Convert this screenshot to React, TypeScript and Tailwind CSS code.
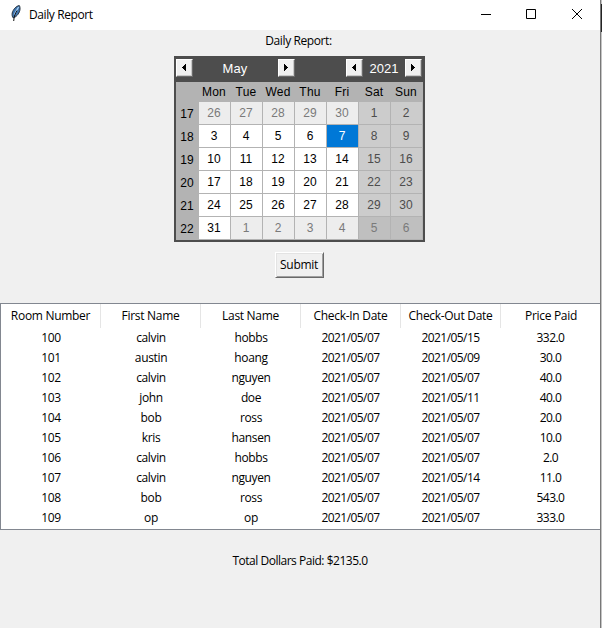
import React from "react";

const weekdays = ["Mon", "Tue", "Wed", "Thu", "Fri", "Sat", "Sun"];

const weeks = [
  { no: 17, days: [26, 27, 28, 29, 30, 1, 2] },
  { no: 18, days: [3, 4, 5, 6, 7, 8, 9] },
  { no: 19, days: [10, 11, 12, 13, 14, 15, 16] },
  { no: 20, days: [17, 18, 19, 20, 21, 22, 23] },
  { no: 21, days: [24, 25, 26, 27, 28, 29, 30] },
  { no: 22, days: [31, 1, 2, 3, 4, 5, 6] },
];

const headings = ["Room Number", "First Name", "Last Name", "Check-In Date", "Check-Out Date", "Price Paid"];

const rows = [
  ["100", "calvin", "hobbs", "2021/05/07", "2021/05/15", "332.0"],
  ["101", "austin", "hoang", "2021/05/07", "2021/05/09", "30.0"],
  ["102", "calvin", "nguyen", "2021/05/07", "2021/05/07", "40.0"],
  ["103", "john", "doe", "2021/05/07", "2021/05/11", "40.0"],
  ["104", "bob", "ross", "2021/05/07", "2021/05/07", "20.0"],
  ["105", "kris", "hansen", "2021/05/07", "2021/05/07", "10.0"],
  ["106", "calvin", "hobbs", "2021/05/07", "2021/05/07", "2.0"],
  ["107", "calvin", "nguyen", "2021/05/07", "2021/05/14", "11.0"],
  ["108", "bob", "ross", "2021/05/07", "2021/05/07", "543.0"],
  ["109", "op", "op", "2021/05/07", "2021/05/07", "333.0"],
];

function dayStyle(week: number, col: number, day: number) {
  const weekend = col > 4;
  const outside = (week === 0 && day > 20) || (week === 5 && day < 20);
  if (day === 7) return "bg-[#0078d7] text-white";
  if (outside) return weekend ? "bg-[#bfbfbf] text-[#7a7a7a]" : "bg-[#ededed] text-[#7a7a7a]";
  return weekend ? "bg-[#cccccc] text-[#4d4d4d]" : "bg-white text-black";
}

function ArrowButton({ dir }: { dir: "left" | "right" }) {
  return (
    <button className="flex h-[18px] w-[17px] shrink-0 items-center justify-center border border-t-white border-l-white border-r-[#696969] border-b-[#696969] bg-[#f0f0f0] shadow-[inset_-1px_-1px_#c8c8c8]">
      <svg width="4" height="7" viewBox="0 0 4 7" shapeRendering="crispEdges">
        <path
          d={dir === "left" ? "M3 0h1v7h-1v-1h-1v-1h-1v-1h-1v-1h1v-1h1v-1h1z" : "M0 0h1v1h1v1h1v1h1v1h-1v1h-1v1h-1v1h-1z"}
          fill="#000"
        />
      </svg>
    </button>
  );
}

function Feather() {
  return (
    <svg width="10" height="17" viewBox="0 0 10 17">
      <path d="M8.3.5C5.200 1 2 4.500 1.200 8c-.4 2 .1 3.800.9 4.800C4.800 12.500 8 9 8.800 5.500 9.300 3.500 9 1.500 8.300.5z" fill="#3f74ad" stroke="#1c2733" strokeWidth=".9" />
      <path d="M7.600 2C6.500 4 4.500 7 3.300 10" stroke="#a9d1f5" strokeWidth="1.300" fill="none" />
      <path d="M6 5.500C4.300 8.500 3 11 2.700 16" stroke="#111" strokeWidth="1" fill="none" />
    </svg>
  );
}

function Calendar() {
  return (
    <div className="mr-[2px] flex h-[186px] w-[251px] shrink-0 flex-col bg-[#4d4d4d] px-[2px] pb-[2px] font-['Liberation_Sans',Arial,sans-serif] text-black">
      <div className="flex h-[26px] shrink-0 items-center pr-px pb-[3px] text-[13px] text-white">
        <ArrowButton dir="left" />
        <span className="w-[85px] pt-[2px] text-center leading-[16px] tracking-[0.2px]">May</span>
        <ArrowButton dir="right" />
        <span className="flex-1" />
        <ArrowButton dir="left" />
        <span className="w-[42px] pt-[2px] pl-px text-center leading-[16px]">2021</span>
        <ArrowButton dir="right" />
      </div>
      <div className="flex h-[20px] bg-[#b3b3b3] pl-[23px] text-[12px] leading-[20px]">
        {weekdays.map((d) => (
          <span key={d} className="w-[32px] pr-px text-center tracking-[0.2px]">{d}</span>
        ))}
      </div>
      {weeks.map((w, i) => (
        <div key={w.no} className="flex h-[23px] bg-[#b3b3b3] pb-px text-[12px] leading-[22px]">
          <span className="w-[23px] pt-px text-center">{w.no}</span>
          <div className="flex gap-px">
            {w.days.map((d, c) => (
              <span key={c} className={`w-[31px] text-center ${dayStyle(i, c, d)}`}>{d}</span>
            ))}
          </div>
        </div>
      ))}
    </div>
  );
}

export default function App() {
  return (
    <div className="flex h-[628px] w-[602px] overflow-hidden bg-[#f0f0f0] font-['Open_Sans',sans-serif] text-[12px] leading-[16px] text-black">
      <main className="flex w-[600px] shrink-0 flex-col items-center">
        <header className="flex h-[30px] w-full shrink-0 bg-white">
          <div className="flex flex-1 items-start gap-[8px] pt-[5px] pl-[11px]">
            <Feather />
            <span className="pt-[2px] tracking-[-0.4px]">Daily Report</span>
          </div>
          <svg width="120" height="30" viewBox="0 0 120 30" fill="none" stroke="#000">
            <path d="M1 14.500h10" />
            <path d="M46.500 9.500h9v9h-9z" />
            <path d="M92 9l10 10M102 9l-10 10" />
          </svg>
        </header>
        <div className="flex h-[26px] shrink-0 items-start justify-center pt-[3px] pr-[3px] tracking-[-0.4px]">Daily Report:</div>
        <Calendar />
        <button className="mt-[10px] mr-[2px] h-[26px] w-[49px] shrink-0 border border-t-white border-l-white border-r-[#696969] border-b-[#696969] bg-[#f0f0f0] tracking-[-0.3px] shadow-[inset_1px_1px_#e3e3e3,inset_-1px_-1px_#a0a0a0]">
          Submit
        </button>
        <section className="mt-[25px] h-[227px] w-full shrink-0 border-y border-l border-[#828790] bg-white">
          <div className="grid h-[24px] grid-cols-[repeat(6,100px)]">
            {headings.map((label) => (
              <span key={label} className="border-r border-[#e5e5e5] text-center leading-[24px] tracking-[-0.3px] last:border-r-0">{label}</span>
            ))}
          </div>
          {rows.map((r) => (
            <div key={r[0]} className="grid h-[20px] grid-cols-[repeat(6,100px)] text-center leading-[20px]">
              {r.map((v, i) => (
                <span key={i} className={i > 2 ? "pr-px tracking-[-0.55px]" : "tracking-[-0.35px]"}>{v}</span>
              ))}
            </div>
          ))}
        </section>
        <footer className="mt-[23px] tracking-[-0.48px]">Total Dollars Paid: $2135.0</footer>
      </main>
      <div className="w-px bg-[#787878]" />
      <div className="flex w-px flex-col bg-[#c4c4c4] pt-[4px]">
        <div className="h-[28px] bg-[#242424]" />
      </div>
    </div>
  );
}
